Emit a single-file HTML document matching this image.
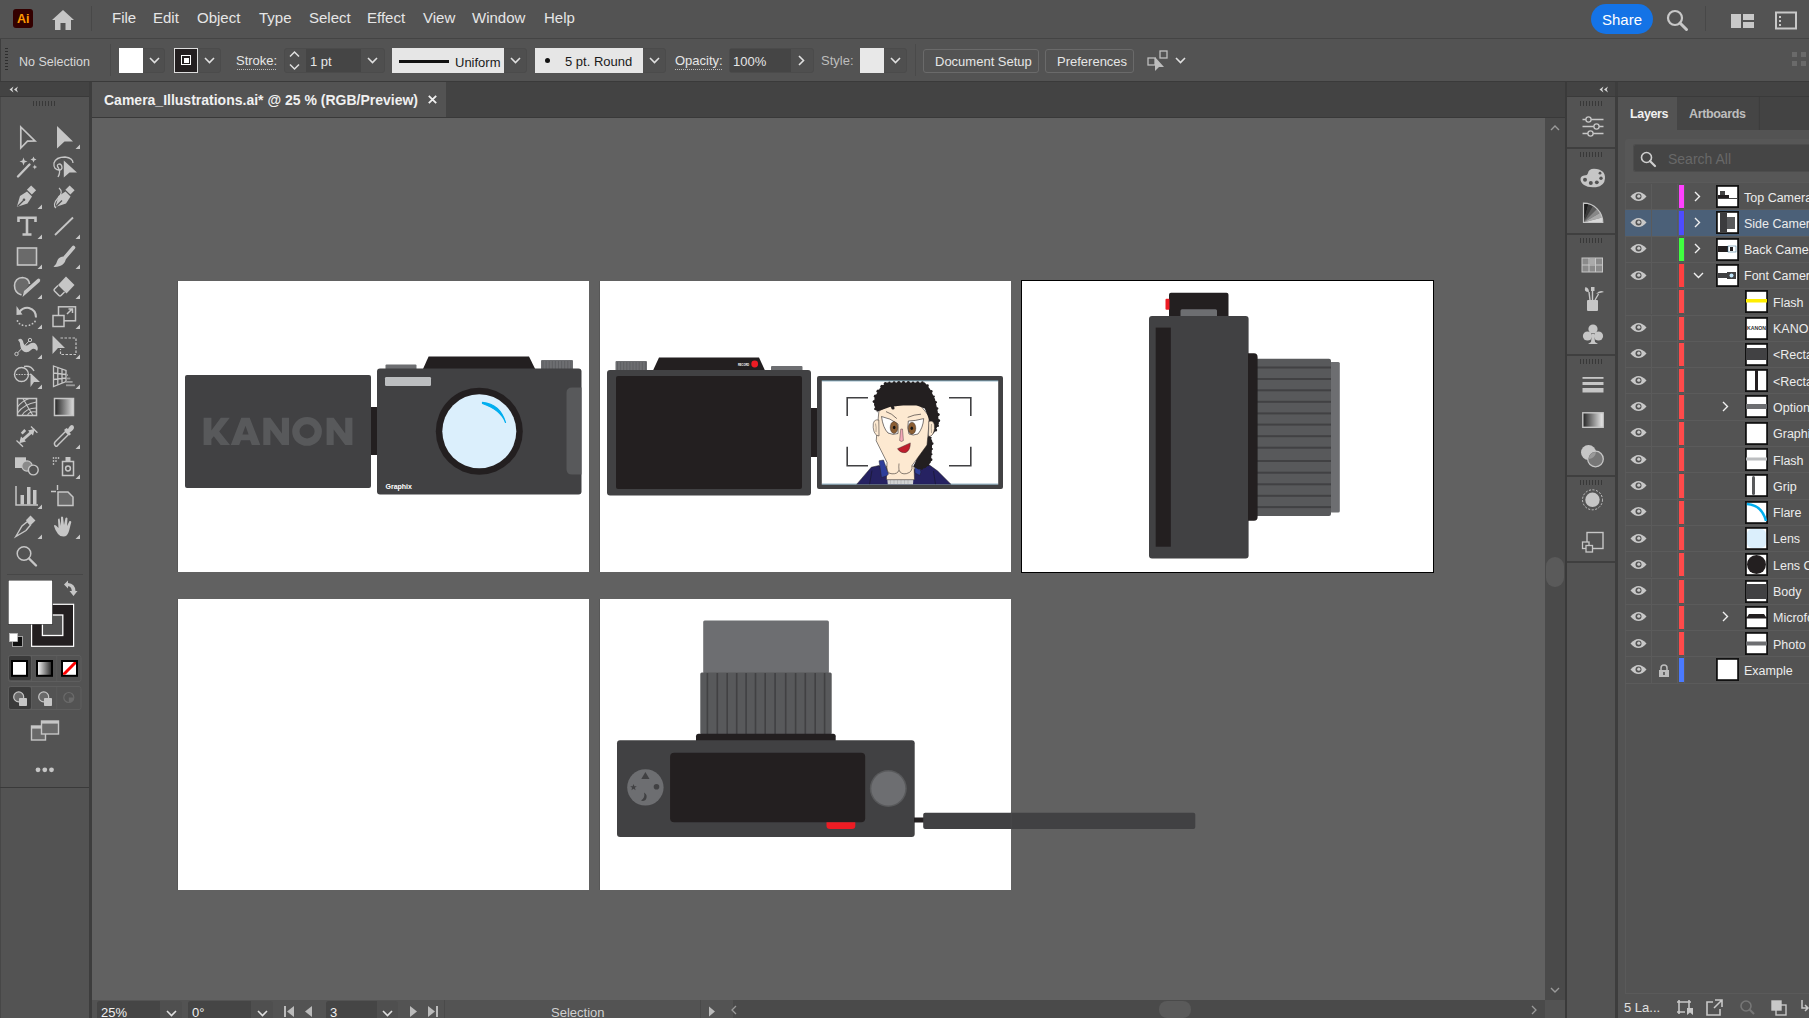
<!DOCTYPE html><html><head><meta charset="utf-8"><style>
*{margin:0;padding:0;box-sizing:border-box}
html,body{width:1809px;height:1018px;overflow:hidden;background:#535353;font-family:"Liberation Sans",sans-serif;color:#dedede}
.a{position:absolute}
.t{position:absolute;white-space:nowrap;line-height:1}
svg{position:absolute;overflow:visible}
</style></head><body><div class="a" style="left:0;top:0;width:1809px;height:38px;background:#535353"></div><div class="a" style="left:0;top:38px;width:1809px;height:1px;background:#444"></div><div class="a" style="left:13px;top:9px;width:20px;height:19px;background:#330000;border-radius:3px"></div><div class="t" style="left:17px;top:12.5px;font-size:12.5px;font-weight:bold;color:#ff9a00;letter-spacing:0px">Ai</div><svg style="left:51px;top:10px" width="24" height="21" viewBox="0 0 24 21"><path d="M12 0 L23 10 L20 10 L20 20 L14.5 20 L14.5 13 L9.5 13 L9.5 20 L4 20 L4 10 L1 10 Z" fill="#c6c6c6"/></svg><div class="a" style="left:91px;top:6px;width:1px;height:25px;background:#484848"></div><div class="t" style="left:112px;top:10.4px;font-size:15px;color:#e6e6e6">File</div><div class="t" style="left:153px;top:10.4px;font-size:15px;color:#e6e6e6">Edit</div><div class="t" style="left:197px;top:10.4px;font-size:15px;color:#e6e6e6">Object</div><div class="t" style="left:259px;top:10.4px;font-size:15px;color:#e6e6e6">Type</div><div class="t" style="left:309px;top:10.4px;font-size:15px;color:#e6e6e6">Select</div><div class="t" style="left:367px;top:10.4px;font-size:15px;color:#e6e6e6">Effect</div><div class="t" style="left:423px;top:10.4px;font-size:15px;color:#e6e6e6">View</div><div class="t" style="left:472px;top:10.4px;font-size:15px;color:#e6e6e6">Window</div><div class="t" style="left:544px;top:10.4px;font-size:15px;color:#e6e6e6">Help</div><div class="a" style="left:1591px;top:4px;width:62px;height:30px;background:#1473e6;border-radius:15px"></div><div class="t" style="left:1602px;top:12px;font-size:15px;color:#fff">Share</div><svg style="left:1666px;top:9px" width="22" height="22" viewBox="0 0 22 22"><circle cx="9" cy="9" r="7" fill="none" stroke="#c8c8c8" stroke-width="2.2"/><line x1="14" y1="14" x2="20.5" y2="20.5" stroke="#c8c8c8" stroke-width="3" stroke-linecap="round"/></svg><div class="a" style="left:1705px;top:6px;width:1px;height:25px;background:#484848"></div><svg style="left:1731px;top:13px" width="23" height="16" viewBox="0 0 23 16"><rect x="0" y="1" width="10" height="14" fill="#c8c8c8"/><rect x="12" y="1" width="11" height="6" fill="#c8c8c8"/><rect x="12" y="9" width="11" height="6" fill="#c8c8c8"/></svg><svg style="left:1775px;top:11px" width="22" height="19" viewBox="0 0 22 19"><rect x="1" y="1.5" width="20" height="16" fill="none" stroke="#c8c8c8" stroke-width="2"/><rect x="4" y="5" width="2" height="2" fill="#c8c8c8"/><rect x="4" y="9" width="2" height="2" fill="#c8c8c8"/><rect x="4" y="13" width="2" height="2" fill="#c8c8c8"/></svg><div class="a" style="left:0;top:39px;width:1809px;height:42px;background:#535353"></div><div class="a" style="left:0;top:39px;width:1px;height:42px;background:#3e3e3e"></div><div class="a" style="left:0;top:81px;width:1809px;height:1px;background:#3a3a3a"></div><div class="a" style="left:5px;top:48px;width:3px;height:1px;background:#2e2e2e"></div><div class="a" style="left:5px;top:51px;width:3px;height:1px;background:#2e2e2e"></div><div class="a" style="left:5px;top:54px;width:3px;height:1px;background:#2e2e2e"></div><div class="a" style="left:5px;top:57px;width:3px;height:1px;background:#2e2e2e"></div><div class="a" style="left:5px;top:60px;width:3px;height:1px;background:#2e2e2e"></div><div class="a" style="left:5px;top:63px;width:3px;height:1px;background:#2e2e2e"></div><div class="a" style="left:5px;top:66px;width:3px;height:1px;background:#2e2e2e"></div><div class="a" style="left:5px;top:69px;width:3px;height:1px;background:#2e2e2e"></div><div class="t" style="left:19px;top:56px;font-size:12.5px;color:#d8d8d8">No Selection</div><div class="a" style="left:110px;top:44px;width:1px;height:32px;background:#4a4a4a"></div><div class="a" style="left:119px;top:48px;width:46px;height:25px;border:1px solid #4b4b4b;border-radius:3px;background:#4f4f4f"></div><div class="a" style="left:119px;top:48px;width:24px;height:25px;background:#fff"></div><svg style="left:149px;top:57px" width="11" height="7" viewBox="0 0 11 7"><path d="M1 1 L5.5 5.5 L10 1" fill="none" stroke="#e0e0e0" stroke-width="1.6"/></svg><div class="a" style="left:173px;top:48px;width:48px;height:25px;border:1px solid #4b4b4b;border-radius:3px;background:#4f4f4f"></div><div class="a" style="left:174px;top:48px;width:24px;height:25px;background:#231f20;border:1px solid #ddd"></div><div class="a" style="left:181px;top:55px;width:10px;height:10px;border:1.5px solid #fff"></div><div class="a" style="left:183.5px;top:57.5px;width:5px;height:5px;background:#fff"></div><svg style="left:204px;top:57px" width="11" height="7" viewBox="0 0 11 7"><path d="M1 1 L5.5 5.5 L10 1" fill="none" stroke="#e0e0e0" stroke-width="1.6"/></svg><div class="t" style="left:236px;top:54px;font-size:13px;color:#e6e6e6">Stroke:</div><div class="a" style="left:237px;top:69px;width:39px;height:1px;border-top:1px dotted #bbb"></div><div class="a" style="left:284px;top:48px;width:101px;height:25px;border:1px solid #4b4b4b;border-radius:3px;background:#4f4f4f"></div><div class="a" style="left:306px;top:49px;width:55px;height:23px;background:#454545"></div><svg style="left:289px;top:51px" width="11" height="19" viewBox="0 0 11 19"><path d="M1 5.5 L5.5 1 L10 5.5 M1 13.5 L5.5 18 L10 13.5" fill="none" stroke="#e0e0e0" stroke-width="1.5"/></svg><div class="t" style="left:310px;top:55px;font-size:13px;color:#e6e6e6">1 pt</div><svg style="left:367px;top:57px" width="11" height="7" viewBox="0 0 11 7"><path d="M1 1 L5.5 5.5 L10 1" fill="none" stroke="#e0e0e0" stroke-width="1.6"/></svg><div class="a" style="left:392px;top:48px;width:135px;height:25px;border:1px solid #4b4b4b;border-radius:3px;background:#4f4f4f"></div><div class="a" style="left:392px;top:48px;width:112px;height:25px;background:#e6e6e6"></div><div class="a" style="left:399px;top:60px;width:50px;height:3px;background:#111"></div><div class="t" style="left:455px;top:56px;font-size:13px;color:#1a1a1a">Uniform</div><svg style="left:510px;top:57px" width="11" height="7" viewBox="0 0 11 7"><path d="M1 1 L5.5 5.5 L10 1" fill="none" stroke="#e0e0e0" stroke-width="1.6"/></svg><div class="a" style="left:535px;top:48px;width:131px;height:25px;border:1px solid #4b4b4b;border-radius:3px;background:#4f4f4f"></div><div class="a" style="left:535px;top:48px;width:108px;height:25px;background:#e6e6e6"></div><div class="a" style="left:545px;top:58px;width:5px;height:5px;border-radius:50%;background:#111"></div><div class="t" style="left:565px;top:55px;font-size:13px;color:#1a1a1a">5 pt. Round</div><svg style="left:649px;top:57px" width="11" height="7" viewBox="0 0 11 7"><path d="M1 1 L5.5 5.5 L10 1" fill="none" stroke="#e0e0e0" stroke-width="1.6"/></svg><div class="t" style="left:675px;top:54px;font-size:13px;color:#e6e6e6">Opacity:</div><div class="a" style="left:675px;top:69px;width:47px;height:1px;border-top:1px dotted #bbb"></div><div class="a" style="left:729px;top:48px;width:85px;height:25px;border:1px solid #4b4b4b;border-radius:3px;background:#4f4f4f"></div><div class="a" style="left:730px;top:49px;width:61px;height:23px;background:#454545"></div><div class="t" style="left:733px;top:55px;font-size:13px;color:#e6e6e6">100%</div><svg style="left:798px;top:55px" width="7" height="11" viewBox="0 0 7 11"><path d="M1 1 L5.5 5.5 L1 10" fill="none" stroke="#e0e0e0" stroke-width="1.6"/></svg><div class="t" style="left:821px;top:54px;font-size:13px;color:#bdbdbd">Style:</div><div class="a" style="left:860px;top:48px;width:47px;height:25px;border:1px solid #4b4b4b;border-radius:3px;background:#4f4f4f"></div><div class="a" style="left:860px;top:48px;width:24px;height:25px;background:#e8e8e8"></div><svg style="left:890px;top:57px" width="11" height="7" viewBox="0 0 11 7"><path d="M1 1 L5.5 5.5 L10 1" fill="none" stroke="#e0e0e0" stroke-width="1.6"/></svg><div class="a" style="left:915px;top:44px;width:1px;height:32px;background:#4a4a4a"></div><div class="a" style="left:923px;top:49px;width:116px;height:24px;border:1px solid #6a6a6a;border-radius:3px;background:#535353"></div><div class="t" style="left:935px;top:55px;font-size:13px;color:#e6e6e6">Document Setup</div><div class="a" style="left:1045px;top:49px;width:89px;height:24px;border:1px solid #6a6a6a;border-radius:3px;background:#535353"></div><div class="t" style="left:1057px;top:55px;font-size:13px;color:#e6e6e6">Preferences</div><svg style="left:1147px;top:50px" width="22" height="22" viewBox="0 0 22 22"><rect x="1" y="8" width="7" height="7" fill="none" stroke="#bdbdbd" stroke-width="1.3"/><rect x="13" y="1" width="7" height="7" fill="none" stroke="#bdbdbd" stroke-width="1.3"/><path d="M8 7 L8 21 L12 17 L17 17 Z" fill="#bdbdbd"/></svg><svg style="left:1175px;top:57px" width="11" height="7" viewBox="0 0 11 7"><path d="M1 1 L5.5 5.5 L10 1" fill="none" stroke="#e0e0e0" stroke-width="1.6"/></svg><svg style="left:1791px;top:51px" width="18" height="18" viewBox="0 0 18 18"><rect x="1" y="1" width="5" height="5" fill="#6a6a6a"/><rect x="10" y="1" width="5" height="5" fill="#6a6a6a"/><rect x="1" y="10" width="5" height="5" fill="#6a6a6a"/><rect x="10" y="10" width="5" height="5" fill="#6a6a6a"/></svg><div class="a" style="left:0;top:82px;width:89px;height:936px;background:#535353"></div><div class="a" style="left:0;top:82px;width:89px;height:14px;background:#434343"></div><div class="a" style="left:0;top:96px;width:89px;height:1px;background:#3a3a3a"></div><svg style="left:9px;top:86px" width="10" height="7" viewBox="0 0 10 7"><path d="M4.5 0.5 L0.5 3.5 L4.5 6.5 L3.2 3.5 Z M9 0.5 L5 3.5 L9 6.5 L7.7 3.5 Z" fill="#d8d8d8"/></svg><div class="a" style="left:89px;top:82px;width:3px;height:936px;background:#3d3d3d"></div><div class="a" style="left:0;top:97px;width:1px;height:921px;background:#474747"></div><div class="a" style="left:33px;top:101px;width:1px;height:5px;background:#383838"></div><div class="a" style="left:36px;top:101px;width:1px;height:5px;background:#383838"></div><div class="a" style="left:39px;top:101px;width:1px;height:5px;background:#383838"></div><div class="a" style="left:42px;top:101px;width:1px;height:5px;background:#383838"></div><div class="a" style="left:45px;top:101px;width:1px;height:5px;background:#383838"></div><div class="a" style="left:48px;top:101px;width:1px;height:5px;background:#383838"></div><div class="a" style="left:51px;top:101px;width:1px;height:5px;background:#383838"></div><div class="a" style="left:54px;top:101px;width:1px;height:5px;background:#383838"></div><div class="a" style="left:7px;top:574px;width:76px;height:1px;background:#474747"></div><div class="a" style="left:0;top:787px;width:89px;height:1px;background:#3a3a3a"></div><svg style="left:0;top:0" width="92" height="1018" viewBox="0 0 92 1018"><path d="M20.8 127 L35 141 L27.5 141.2 L20.8 148 Z" fill="none" stroke="#c6c6c6" stroke-width="1.7" stroke-linejoin="miter"/><path d="M57 126 L73 141.5 L64.5 141.5 L57 148.5 Z" fill="#c6c6c6"/><path d="M80 149 L75.5 149 L80 144.5 Z" fill="#c6c6c6"/><line x1="18" y1="176.5" x2="29.5" y2="164.5" stroke="#c6c6c6" stroke-width="2.4" stroke-linecap="round"/><path d="M23.5 157.5 L24.6 160.4 L27.5 161.5 L24.6 162.6 L23.5 165.5 L22.4 162.6 L19.5 161.5 L22.4 160.4 Z" fill="#c6c6c6"/><path d="M33.5 156.5 L34.4 158.6 L36.5 159.5 L34.4 160.4 L33.5 162.5 L32.6 160.4 L30.5 159.5 L32.6 158.6 Z" fill="#c6c6c6"/><path d="M34.8 164.5 L35.5 166.2 L37.2 167 L35.5 167.8 L34.8 169.5 L34.1 167.8 L32.4 167 L34.1 166.2 Z" fill="#c6c6c6"/><path d="M60 170 Q53 170 54 163 Q56 157 65 157 Q73 158 73 163 M58 177 Q61 172 58.5 168 Q56 165 59 164 Q62 164 62 168 Q61 171 58 170" fill="none" stroke="#c6c6c6" stroke-width="1.3"/><path d="M63.8 160.5 L77 172.5 L69.5 172.5 L63.8 177.5 Z" fill="#c6c6c6"/><path d="M16.8 207 L20 196 L27 191.5 L32 196.5 L27.5 203.5 Z" fill="#c6c6c6"/><rect x="28" y="187" width="7" height="6" transform="rotate(45 31.5 190)" fill="#c6c6c6"/><path d="M17.5 206.5 L23.5 200.5" stroke="#535353" stroke-width="1.2"/><circle cx="24" cy="199.8" r="1.3" fill="#535353"/><path d="M42 209 L37.5 209 L42 204.5 Z" fill="#c6c6c6"/><path d="M55.5 207 L58.5 196 L65.5 191.5 L70.5 196.5 L66 203.5 Z" fill="#c6c6c6"/><rect x="66.5" y="187" width="7" height="6" transform="rotate(45 70 190)" fill="#c6c6c6"/><path d="M56 206.5 L62 200.5" stroke="#535353" stroke-width="1.2"/><path d="M59 188 Q64 192 58 198 Q52 205 56 208" fill="none" stroke="#c6c6c6" stroke-width="1.2"/><path d="M18.5 222 L18.5 217.8 L35.5 217.8 L35.5 222 M27 218 L27 234.5 M22.5 234.5 L31.5 234.5" fill="none" stroke="#c6c6c6" stroke-width="2.6"/><path d="M42 239 L37.5 239 L42 234.5 Z" fill="#c6c6c6"/><line x1="55" y1="235" x2="73" y2="217.5" stroke="#c6c6c6" stroke-width="1.8"/><path d="M80 239 L75.5 239 L80 234.5 Z" fill="#c6c6c6"/><rect x="17.5" y="248" width="19" height="17" fill="#6a6a6a" stroke="#c6c6c6" stroke-width="1.6"/><path d="M42 269 L37.5 269 L42 264.5 Z" fill="#c6c6c6"/><line x1="73.5" y1="247.5" x2="64.5" y2="258" stroke="#c6c6c6" stroke-width="3.6" stroke-linecap="round"/><path d="M62.5 256.5 L65.8 259.6 Q64.5 264.5 60 266 Q56 267.3 53.5 266.8 Q56.5 264.5 57 261.5 Q58 257.5 62.5 256.5 Z" fill="#c6c6c6"/><path d="M80 269 L75.5 269 L80 264.5 Z" fill="#c6c6c6"/><path d="M21.5 295 Q14.5 293 14.5 285.5 Q15 278 22.5 277.5 Q29 278 29.5 284" fill="#6a6a6a" stroke="#c6c6c6" stroke-width="1.6"/><path d="M22.5 297 L24 291 L37.5 279 Q39 278 40 279.5 Q40.5 281 39.5 282 L26 294 Z" fill="#c6c6c6"/><path d="M42 299 L37.5 299 L42 294.5 Z" fill="#c6c6c6"/><path d="M66 276.5 L74.5 285 L66.5 293.5 L58 285 Z" fill="#c6c6c6"/><path d="M58 285.5 L54.5 289 Q53.5 290 54.5 291 L59 295.5 Q60 296.5 61 295.5 L64.5 292" fill="none" stroke="#c6c6c6" stroke-width="1.5"/><path d="M80 299 L75.5 299 L80 294.5 Z" fill="#c6c6c6"/><path d="M19 312.5 Q23 307 29 308 Q36 310 36 317.5" fill="none" stroke="#c6c6c6" stroke-width="2"/><path d="M16.5 306 L22.5 314.5 L16.5 315 Z" fill="#c6c6c6"/><circle cx="17.5" cy="321" r="0.9" fill="#c6c6c6"/><circle cx="19.5" cy="323.7" r="0.9" fill="#c6c6c6"/><circle cx="22.5" cy="325.2" r="0.9" fill="#c6c6c6"/><circle cx="26" cy="325.8" r="0.9" fill="#c6c6c6"/><circle cx="29.5" cy="325.2" r="0.9" fill="#c6c6c6"/><circle cx="32.5" cy="323.7" r="0.9" fill="#c6c6c6"/><circle cx="35" cy="321.5" r="0.9" fill="#c6c6c6"/><path d="M42 329 L37.5 329 L42 324.5 Z" fill="#c6c6c6"/><rect x="58.5" y="306.8" width="17" height="14" fill="none" stroke="#c6c6c6" stroke-width="1.5"/><rect x="53" y="315.5" width="11" height="11" fill="#535353" stroke="#c6c6c6" stroke-width="1.5"/><path d="M67 314 L72 309 M68.5 309 L72.5 309 L72.5 313" fill="none" stroke="#c6c6c6" stroke-width="1.5"/><path d="M80 329 L75.5 329 L80 324.5 Z" fill="#c6c6c6"/><path d="M18 340 Q21 337 23 341 Q24 347 28 345 Q33 341 36 344 Q39 348 37 351 Q34 347 31 350 Q27 354 23 351 Q20 348 20 343 Q19 341 18 340 Z" fill="#c6c6c6"/><line x1="16.5" y1="354" x2="30" y2="340" stroke="#c6c6c6" stroke-width="1"/><circle cx="16.5" cy="354" r="1.7" fill="#535353" stroke="#c6c6c6" stroke-width="1"/><circle cx="30" cy="340" r="1.7" fill="#535353" stroke="#c6c6c6" stroke-width="1"/><path d="M42 359 L37.5 359 L42 354.5 Z" fill="#c6c6c6"/><path d="M52.5 335.5 L65 348 L58 348 L52.5 354 Z" fill="#c6c6c6"/><path d="M60.5 338 L76 338 L76 354.5 L60.5 354.5 L60.5 349" fill="none" stroke="#c6c6c6" stroke-width="1.2" stroke-dasharray="2.5 1.5"/><path d="M80 359 L75.5 359 L80 354.5 Z" fill="#c6c6c6"/><circle cx="21.5" cy="374.5" r="7" fill="none" stroke="#c6c6c6" stroke-width="1.4"/><path d="M24 366.5 Q31 365 34 371" fill="none" stroke="#c6c6c6" stroke-width="1.4"/><path d="M16 374.5 L31 374.5" stroke="#c6c6c6" stroke-width="1" stroke-dasharray="1.5 1.2"/><path d="M30.5 373 L40 382 L34 382 L30.5 387 Z" fill="#c6c6c6"/><path d="M42 389 L37.5 389 L42 384.5 Z" fill="#c6c6c6"/><path d="M53.5 366 L66 370.5 L66 381.5 L53.5 386.5 Z M53.5 373 L66 374.5 M53.5 379.5 L66 378 M57.8 367.5 L57.8 385 M62 369 L62 383" fill="none" stroke="#c6c6c6" stroke-width="1.3"/><rect x="66" y="374.2" width="2.0" height="1.8" fill="#9a9a9a"/><rect x="66" y="377.6" width="4.3" height="1.8" fill="#9a9a9a"/><rect x="66" y="381" width="6.6" height="1.8" fill="#9a9a9a"/><rect x="66" y="384.4" width="8.899999999999999" height="1.8" fill="#9a9a9a"/><path d="M80 389 L75.5 389 L80 384.5 Z" fill="#c6c6c6"/><rect x="17.5" y="398.5" width="19" height="17" fill="none" stroke="#c6c6c6" stroke-width="1.5"/><path d="M17.5 407 Q22 401 29 398.5 M17.5 413 Q24 404 36.5 402 M22 415.5 Q26 408 36.5 408 M27.5 415.5 Q29 411 36.5 412 M23 398.5 Q27 406 33 415.5" fill="none" stroke="#c6c6c6" stroke-width="1.1"/><defs><linearGradient id="tg" x1="0" x2="1"><stop offset="0" stop-color="#222"/><stop offset="1" stop-color="#ddd"/></linearGradient></defs><rect x="54.5" y="398.5" width="19" height="17" fill="url(#tg)" stroke="#c6c6c6" stroke-width="1.5"/><line x1="22.5" y1="440" x2="31.5" y2="432" stroke="#c6c6c6" stroke-width="3"/><path d="M19.2 443.2 L21 436.5 L26 441.5 Z M34.8 428.8 L33 435.5 L28 430.5 Z" fill="#c6c6c6"/><path d="M16.5 440.5 L23 446.8 M31 426.5 L37.4 432.8" stroke="#c6c6c6" stroke-width="1.3"/><rect x="21" y="430.5" width="5" height="2.6" transform="rotate(-45 23.5 431.8)" fill="#c6c6c6"/><path d="M55.5 446 Q53.5 444 55 442 L65.5 431.5 L68.5 434.5 L58 445 Q56.5 447 55.5 446 Z" fill="none" stroke="#c6c6c6" stroke-width="1.4"/><path d="M64 430 L69.5 435.5 L71 434 L69.5 432.5 Q74 430 74 427.5 Q74 425 72 425 Q70 425 68 429 L66.5 428 Z" fill="#c6c6c6"/><path d="M80 449 L75.5 449 L80 444.5 Z" fill="#c6c6c6"/><rect x="15" y="457.3" width="11" height="10.7" fill="#c6c6c6"/><circle cx="27" cy="466" r="5.2" fill="#8a8a8a" stroke="#c6c6c6" stroke-width="1.2"/><circle cx="33.3" cy="470" r="4.9" fill="#535353" stroke="#c6c6c6" stroke-width="1.4"/><path d="M52.6 458 L54.4 458 M53.5 457.1 L53.5 458.9" stroke="#c6c6c6" stroke-width="0.8"/><path d="M55.1 458 L56.9 458 M56 457.1 L56 458.9" stroke="#c6c6c6" stroke-width="0.8"/><path d="M57.6 458 L59.4 458 M58.5 457.1 L58.5 458.9" stroke="#c6c6c6" stroke-width="0.8"/><path d="M52.6 461 L54.4 461 M53.5 460.1 L53.5 461.9" stroke="#c6c6c6" stroke-width="0.8"/><path d="M55.1 461 L56.9 461 M56 460.1 L56 461.9" stroke="#c6c6c6" stroke-width="0.8"/><path d="M52.6 464 L54.4 464 M53.5 463.1 L53.5 464.9" stroke="#c6c6c6" stroke-width="0.8"/><rect x="62.5" y="461.5" width="11" height="14" fill="none" stroke="#c6c6c6" stroke-width="1.5"/><rect x="65.5" y="457" width="5" height="4" fill="#c6c6c6"/><circle cx="68" cy="468.5" r="2.4" fill="none" stroke="#c6c6c6" stroke-width="1.5"/><path d="M80 479 L75.5 479 L80 474.5 Z" fill="#c6c6c6"/><path d="M16 486 L16 505 L38 505" fill="none" stroke="#c6c6c6" stroke-width="1.5"/><rect x="20.5" y="495" width="3.5" height="9.5" fill="#c6c6c6"/><rect x="27" y="487" width="3.5" height="17.5" fill="#c6c6c6"/><rect x="33" y="490" width="3.5" height="14.5" fill="#c6c6c6"/><path d="M42 509 L37.5 509 L42 504.5 Z" fill="#c6c6c6"/><path d="M57.5 485 L57.5 490 M51 491.5 L56 491.5" stroke="#c6c6c6" stroke-width="1.4"/><path d="M58 492 L68 492 L73 497 L73 505.5 L58 505.5 Z" fill="#6a6a6a" stroke="#c6c6c6" stroke-width="1.5"/><path d="M15.8 536.5 L22 526 L27.5 521.5 L30.5 525 L26 530.5 Z" fill="none" stroke="#c6c6c6" stroke-width="1.4"/><rect x="27" y="517" width="7" height="6.5" transform="rotate(45 30.5 520.5)" fill="#c6c6c6"/><path d="M42 539 L37.5 539 L42 534.5 Z" fill="#c6c6c6"/><path d="M58 534 Q55 530 54 526 Q54 524.5 56 525.5 L58.5 528 L58 520 Q58 518 59.5 518.5 L61 526 L61 517.5 Q61.5 516 63 517 L64 525 L65.5 518 Q67 517 67.5 518.5 L67 526 L69.5 521 Q71 520.5 71.3 522 L69 531 Q67.5 536.5 63.5 536.5 Q60 536.5 58 534 Z" fill="#c6c6c6"/><path d="M80 539 L75.5 539 L80 534.5 Z" fill="#c6c6c6"/><circle cx="24" cy="553.5" r="6.8" fill="none" stroke="#c6c6c6" stroke-width="1.5"/><line x1="29" y1="558.5" x2="36" y2="565.5" stroke="#c6c6c6" stroke-width="2.4" stroke-linecap="round"/><rect x="31" y="603.7" width="43.2" height="43.2" fill="#fff"/><rect x="32.2" y="604.9" width="40.8" height="40.8" fill="#231f20"/><rect x="42.4" y="615" width="20.4" height="20.5" fill="#535353" stroke="#fff" stroke-width="1.3"/><rect x="8" y="580" width="44.8" height="44.6" fill="#2a2a2a"/><rect x="8.6" y="580.5" width="43.6" height="43.6" fill="#fff"/><path d="M64 584.5 L68 580.5 L68 583 Q75 583.5 75.5 591 L77.5 591 L73.5 596 L69.5 591 L71.8 591 Q71.5 586.5 68 586.3 L68 588.5 Z" fill="#c6c6c6"/><rect x="12.5" y="636.5" width="10" height="10" fill="#111" stroke="#bbb" stroke-width="0.8"/><rect x="9.5" y="633.5" width="8" height="8" fill="#fff" stroke="#bbb" stroke-width="0.8"/><rect x="8.5" y="655.5" width="72.5" height="26" rx="2" fill="#535353" stroke="#5e5e5e" stroke-width="1"/><rect x="9" y="656" width="22" height="24" rx="2" fill="#3a3a3a"/><path d="M31.5 656 L31.5 681 M56.7 656 L56.7 681" stroke="#5b5b5b" stroke-width="1"/><rect x="12" y="661" width="15" height="14.8" fill="#fff" stroke="#000" stroke-width="2"/><defs><linearGradient id="tg2" x1="0" x2="1"><stop offset="0" stop-color="#fff"/><stop offset="1" stop-color="#222"/></linearGradient></defs><rect x="37" y="661" width="15" height="14.8" fill="url(#tg2)" stroke="#000" stroke-width="2"/><defs><clipPath id="nc"><rect x="63" y="662" width="13" height="12.8"/></clipPath></defs><rect x="62" y="661" width="15" height="14.8" fill="#fff" stroke="#000" stroke-width="2"/><line x1="61" y1="677" x2="78" y2="660" stroke="#ff0000" stroke-width="3" clip-path="url(#nc)"/><rect x="8.5" y="686.5" width="72.5" height="23" rx="2" fill="#535353" stroke="#5e5e5e" stroke-width="1"/><rect x="9" y="687" width="22" height="22" rx="2" fill="#3a3a3a"/><path d="M31.5 687 L31.5 709 M56.7 687 L56.7 709" stroke="#5b5b5b" stroke-width="1"/><circle cx="18.7" cy="696.9" r="5" fill="#6a6a6a" stroke="#c6c6c6" stroke-width="1.2"/><rect x="19" y="698" width="8" height="8" rx="0.8" fill="#c6c6c6"/><circle cx="43.7" cy="696.9" r="5" fill="#6a6a6a" stroke="#c6c6c6" stroke-width="1.2"/><rect x="44" y="698" width="8" height="8" rx="0.8" fill="#c6c6c6"/><circle cx="68.8" cy="697.5" r="5" fill="none" stroke="#6a6a6a" stroke-width="1.2"/><path d="M68.8 697.5 L73.8 697.5 A5 5 0 0 1 68.8 702.5 Z" fill="#6a6a6a"/><rect x="31.5" y="726" width="14" height="14" fill="#6a6a6a" stroke="#c6c6c6" stroke-width="1.4"/><rect x="41.5" y="721" width="17" height="13" fill="#6a6a6a" stroke="#c6c6c6" stroke-width="1.4"/><rect x="41.5" y="721" width="17" height="2.6" fill="#c6c6c6"/><rect x="31.5" y="726" width="10" height="2.6" fill="#c6c6c6"/><circle cx="38" cy="769.8" r="2.4" fill="#c6c6c6"/><circle cx="44.8" cy="769.8" r="2.4" fill="#c6c6c6"/><circle cx="51.5" cy="769.8" r="2.4" fill="#c6c6c6"/></svg><div class="a" style="left:92px;top:82px;width:1473px;height:35px;background:#434343"></div><div class="a" style="left:92px;top:82px;width:354px;height:35px;background:#535353"></div><div class="a" style="left:92px;top:117px;width:1473px;height:1px;background:#393939"></div><div class="t" style="left:104px;top:93px;font-size:14px;font-weight:bold;color:#f0f0f0">Camera_Illustrations.ai* @ 25 % (RGB/Preview)</div><svg style="left:428px;top:95px" width="9" height="9" viewBox="0 0 9 9"><path d="M0.8 0.8 L8.2 8.2 M8.2 0.8 L0.8 8.2" stroke="#f0f0f0" stroke-width="1.8"/></svg><div class="a" style="left:92px;top:118px;width:1453px;height:882px;background:#616161"></div><div class="a" style="left:1545px;top:118px;width:20px;height:882px;background:#4a4a4a"></div><svg style="left:1550px;top:125px" width="10" height="6" viewBox="0 0 10 6"><path d="M1 5 L5 1 L9 5" fill="none" stroke="#9a9a9a" stroke-width="1.4"/></svg><svg style="left:1550px;top:987px" width="10" height="6" viewBox="0 0 10 6"><path d="M1 1 L5 5 L9 1" fill="none" stroke="#9a9a9a" stroke-width="1.4"/></svg><div class="a" style="left:1546px;top:557px;width:18px;height:30px;border-radius:9px;background:#5a5a5a"></div><div class="a" style="left:1565px;top:82px;width:2px;height:936px;background:#3a3a3a"></div><svg style="left:0;top:0" width="1809" height="1018" viewBox="0 0 1809 1018"><rect x="177" y="281" width="1" height="291" fill="#575757"/><rect x="178" y="281" width="411" height="291" fill="#fff"/><rect x="599" y="281" width="1" height="291" fill="#575757"/><rect x="600" y="281" width="411" height="291" fill="#fff"/><rect x="177" y="599" width="1" height="291" fill="#575757"/><rect x="178" y="599" width="411" height="291" fill="#fff"/><rect x="599" y="599" width="1" height="291" fill="#575757"/><rect x="600" y="599" width="411" height="291" fill="#fff"/><rect x="1021.5" y="280.5" width="412" height="292" fill="#fff" stroke="#000" stroke-width="1"/><rect x="185" y="375" width="186" height="113" rx="2" fill="#414143"/><path fill-rule="evenodd" fill="#58595b" d="M203.6 417.8 H211.4 V430.5 L220.8 417.8 H229.8 L219.2 431.6 L230 445.1 H220.6 L213.8 436.3 L211.4 439.2 V445.1 H203.6 Z M241.3 417.8 H249.7 L260.3 445.1 H251.8 L250 440.2 H241 L239.2 445.1 H230.8 Z M245.5 425.8 L242.4 434.6 H248.6 Z M263.3 417.8 H270.4 L281.9 433.4 V417.8 H289 V445.1 H281.9 L270.4 429.6 V445.1 H263.3 Z M326.6 417.8 H333.7 L345.2 433.4 V417.8 H352.4 V445.1 H345.2 L333.7 429.6 V445.1 H326.6 Z"/><ellipse cx="307.05" cy="431.4" rx="11.2" ry="10.75" fill="none" stroke="#58595b" stroke-width="7.3"/><rect x="371" y="407" width="7" height="48" fill="#231f20"/><path d="M423 369 L428.6 356.5 L529 356.5 L535.2 369 Z" fill="#231f20"/><rect x="385.5" y="364.5" width="31" height="6" rx="1" fill="#6d6e71"/><rect x="541" y="360" width="32" height="10" rx="1" fill="#6d6e71"/><rect x="542.5" y="361" width="1" height="9" fill="#5e5f62"/><rect x="545.6" y="361" width="1" height="9" fill="#5e5f62"/><rect x="548.7" y="361" width="1" height="9" fill="#5e5f62"/><rect x="551.8" y="361" width="1" height="9" fill="#5e5f62"/><rect x="554.9" y="361" width="1" height="9" fill="#5e5f62"/><rect x="558.0" y="361" width="1" height="9" fill="#5e5f62"/><rect x="561.1" y="361" width="1" height="9" fill="#5e5f62"/><rect x="564.2" y="361" width="1" height="9" fill="#5e5f62"/><rect x="567.3" y="361" width="1" height="9" fill="#5e5f62"/><rect x="570.4" y="361" width="1" height="9" fill="#5e5f62"/><rect x="377" y="368.5" width="204.5" height="126" rx="3" fill="#414143"/><rect x="385" y="377" width="46" height="9" rx="1.2" fill="#bcbec0"/><path d="M581.5 387.5 L572 387.5 Q566.5 387.5 566.5 393 L566.5 469 Q566.5 474.5 572 474.5 L581.5 474.5 Z" fill="#58595b"/><circle cx="479.3" cy="431.3" r="43.5" fill="#231f20"/><circle cx="479.3" cy="431.3" r="37" fill="#dbeffc"/><path d="M482.5 402.3 Q500 404 505.5 422.5 Q501 410 482.5 403.5 Z" fill="#00aeef" stroke="#00aeef" stroke-width="1.2" stroke-linejoin="round"/><text x="385.5" y="488.5" font-family="Liberation Sans" font-weight="bold" font-size="7" fill="#fff">Graphix</text><rect x="615.5" y="361" width="31.5" height="10" rx="1" fill="#6d6e71"/><rect x="617.0" y="362" width="1" height="9" fill="#5e5f62"/><rect x="620.1" y="362" width="1" height="9" fill="#5e5f62"/><rect x="623.2" y="362" width="1" height="9" fill="#5e5f62"/><rect x="626.3" y="362" width="1" height="9" fill="#5e5f62"/><rect x="629.4" y="362" width="1" height="9" fill="#5e5f62"/><rect x="632.5" y="362" width="1" height="9" fill="#5e5f62"/><rect x="635.6" y="362" width="1" height="9" fill="#5e5f62"/><rect x="638.7" y="362" width="1" height="9" fill="#5e5f62"/><rect x="641.8" y="362" width="1" height="9" fill="#5e5f62"/><rect x="644.9" y="362" width="1" height="9" fill="#5e5f62"/><path d="M653 370.5 L659 357.5 L759 357.5 L765 370.5 Z" fill="#231f20"/><rect x="771" y="366" width="31.5" height="5" rx="1" fill="#6d6e71"/><text x="738" y="366" font-family="Liberation Sans" font-weight="bold" font-size="3.4" fill="#fff" textLength="11.2" lengthAdjust="spacingAndGlyphs">RECORD</text><circle cx="754.7" cy="364" r="3.4" fill="#ed1c24"/><rect x="607" y="370" width="204" height="125.5" rx="3" fill="#414143"/><rect x="616" y="376" width="186" height="113" rx="2" fill="#231f20"/><rect x="811" y="408" width="7" height="49" fill="#231f20"/><rect x="817" y="376" width="186" height="113" rx="2" fill="#414143"/><rect x="821.8" y="380.6" width="176.4" height="104" fill="#fff"/><line x1="822" y1="380.9" x2="998" y2="380.9" stroke="#2a6a8a" stroke-width="0.6"/><line x1="822" y1="484.1" x2="998" y2="484.1" stroke="#2a6a8a" stroke-width="0.6"/><path d="M868 397.8 L847.2 397.8 L847.2 416 M847.2 446.8 L847.2 465.8 L868 465.8 M949 397.8 L970.8 397.8 L970.8 416 M970.8 446.8 L970.8 465.8 L949 465.8" fill="none" stroke="#414143" stroke-width="1.6"/><defs><clipPath id="scr"><rect x="821.8" y="380.6" width="176.4" height="103.8"/></clipPath></defs><g clip-path="url(#scr)">
<path d="M856.6 484.4 L871.3 467.2 L879 465.5 L887 470 L913 470 L928.8 464.6 L937.7 471 L951.1 484.4 Z" fill="#262262" stroke="#231f20" stroke-width="0.5"/>
<path d="M869.5 484.4 L872 470.5 M935.5 484.4 L933.5 471" stroke="#111" stroke-width="0.45" fill="none"/>
<path d="M887.3 479.2 L913.4 479.2 L913 484.4 L887.8 484.4 Z" fill="#d1d3d4"/>
<path d="M890.5 480 L890.5 484.4 M894 480 L894 484.4 M897.5 480 L897.5 484.4 M901 480 L901 484.4 M904.5 480 L904.5 484.4 M908 480 L908 484.4" stroke="#9a9a9a" stroke-width="0.4"/>
<path d="M886.5 466 L914 466 L914.5 479.7 L886.5 479.7 Z" fill="#fde9d1" stroke="#231f20" stroke-width="0.5"/>
<path d="M879 460.8 L883.5 460 L888.5 474 L886.6 476 L881.5 477.5 Z" fill="#2e3e9a" stroke="#231f20" stroke-width="0.45"/>
<path d="M914.7 464 L917.2 462.5 L921 472 L919.8 475.5 L915 473 Z" fill="#2e3e9a" stroke="#231f20" stroke-width="0.45"/>
<path d="M929 434.5 L932.3 441 L931.8 451.6 L930.8 462.4 L925.5 468 L918.3 469.5 L913.5 466.5 L917.5 457 L923 449 L926 440 Z" fill="#231f20"/>
<circle cx="930.6" cy="437.8" r="1.07" fill="#231f20"/><circle cx="932.2" cy="443.6" r="1.31" fill="#231f20"/><circle cx="931.9" cy="449.0" r="1.06" fill="#231f20"/><circle cx="931.5" cy="454.3" r="1.00" fill="#231f20"/><circle cx="931.0" cy="459.7" r="1.44" fill="#231f20"/><circle cx="928.1" cy="465.2" r="1.10" fill="#231f20"/><circle cx="921.9" cy="468.8" r="1.11" fill="#231f20"/>
<path d="M878.9 411 L876.2 440.8 L887 462.4 Q885.8 474.2 892 473.8 Q897.5 474.2 899 470.2 Q901 474.8 906.5 473.6 Q913 472 911.9 465.7 L927 445 L929 423.5 L929 416 L920 405 L890 405 Z" fill="#fde9d1" stroke="#231f20" stroke-width="0.55"/>
<path d="M899 463.5 Q898.6 467 899 470" fill="none" stroke="#231f20" stroke-width="0.5"/>
<path d="M878.8 420 Q872.5 418.5 873.2 427.5 Q874 435.5 879 436 Z" fill="#fde9d1" stroke="#231f20" stroke-width="0.5"/>
<path d="M875.5 423.5 Q876.5 427 876 432" fill="none" stroke="#231f20" stroke-width="0.35"/>
<path d="M877.3 412.7 L874 405 L874.5 398 L876.2 394.4 L880 388 L883.8 384.6 L887 382.6 L924.8 382.6 L930 389 L935 399 L937.8 411.7 L938.9 423.5 L934.5 432.2 L930.5 436.5 L929 419.2 L924.8 408.4 L916.2 405.2 L903.2 405.2 L894 406.5 L892.4 409 L890.5 406.8 L877.3 411.6 Z" fill="#231f20"/>
<circle cx="875.6" cy="408.9" r="1.47" fill="#231f20"/><circle cx="874.2" cy="401.5" r="1.55" fill="#231f20"/><circle cx="875.4" cy="396.2" r="1.58" fill="#231f20"/><circle cx="878.1" cy="391.2" r="1.67" fill="#231f20"/><circle cx="881.9" cy="386.3" r="1.54" fill="#231f20"/><circle cx="885.4" cy="383.6" r="1.65" fill="#231f20"/><circle cx="889.4" cy="382.6" r="1.12" fill="#231f20"/><circle cx="894.1" cy="382.6" r="1.38" fill="#231f20"/><circle cx="898.8" cy="382.6" r="1.67" fill="#231f20"/><circle cx="903.5" cy="382.6" r="1.49" fill="#231f20"/><circle cx="908.3" cy="382.6" r="1.64" fill="#231f20"/><circle cx="913.0" cy="382.6" r="1.17" fill="#231f20"/><circle cx="917.7" cy="382.6" r="1.38" fill="#231f20"/><circle cx="922.4" cy="382.6" r="1.25" fill="#231f20"/><circle cx="927.4" cy="385.8" r="1.43" fill="#231f20"/><circle cx="931.2" cy="391.5" r="1.44" fill="#231f20"/><circle cx="933.8" cy="396.5" r="1.11" fill="#231f20"/><circle cx="935.7" cy="402.2" r="1.23" fill="#231f20"/><circle cx="937.1" cy="408.5" r="1.27" fill="#231f20"/><circle cx="938.1" cy="414.6" r="1.65" fill="#231f20"/><circle cx="938.6" cy="420.6" r="1.56" fill="#231f20"/><circle cx="937.8" cy="425.7" r="1.20" fill="#231f20"/><circle cx="935.6" cy="430.0" r="1.58" fill="#231f20"/><circle cx="893" cy="408" r="1.6" fill="#231f20"/>
<path d="M928.8 421.4 Q935 419.5 934.5 428.5 Q933.5 436.5 928.5 436.5 Z" fill="#fde9d1" stroke="#231f20" stroke-width="0.5"/>
<path d="M931.5 424 Q931 428 931.5 433" fill="none" stroke="#231f20" stroke-width="0.35"/>
<path d="M881.5 416.5 Q890 418 898 424 L898 433.5 Q893 435.5 888 433 Q883 428 881.5 416.5 Z" fill="#fff" stroke="#231f20" stroke-width="0.6"/>
<path d="M908.3 421 Q915 421 923.7 418.6 Q923 428 918 434 Q913 436 909 434 Q907 428 908.3 421 Z" fill="#fff" stroke="#231f20" stroke-width="0.6"/>
<ellipse cx="894" cy="427.5" rx="3.8" ry="6" fill="#8b5e34" stroke="#231f20" stroke-width="0.4"/>
<ellipse cx="912" cy="428.2" rx="3.8" ry="6" fill="#8b5e34" stroke="#231f20" stroke-width="0.4"/>
<ellipse cx="894.2" cy="427.5" rx="1.3" ry="1.8" fill="#111"/><ellipse cx="911.8" cy="428.2" rx="1.3" ry="1.8" fill="#111"/>
<path d="M886 411.6 Q892 413.5 896.8 418.6 M907.7 417.4 Q914 414.5 921 414.2" fill="none" stroke="#231f20" stroke-width="0.6"/>
<path d="M900.8 429 L899.6 440.5 Q901.5 442.5 903.4 440.5 L902.5 429 Z" fill="#f5a9b8" stroke="#231f20" stroke-width="0.4"/>
<path d="M897.5 448.7 L910.3 442.9 Q910.5 450 906 452.5 Q900.5 453.5 897.5 448.7 Z" fill="#be1e2d" stroke="#231f20" stroke-width="0.4"/>
</g><rect x="1169" y="292.7" width="59.5" height="26" rx="2" fill="#231f20"/><rect x="1165.5" y="298.7" width="4" height="11" rx="1" fill="#ed1c24"/><rect x="1180.5" y="309.2" width="36.5" height="8" rx="1.5" fill="#6d6e71"/><rect x="1149" y="316" width="99.6" height="242.5" rx="3" fill="#414143"/><rect x="1155.7" y="327.6" width="15.1" height="219.1" fill="#231f20"/><rect x="1330" y="362" width="9.8" height="150.6" rx="1.5" fill="#6d6e71"/><rect x="1255" y="358.7" width="76" height="157.2" rx="2" fill="#58595b"/><rect x="1257" y="366.5" width="74" height="2" fill="#414143"/><rect x="1257" y="378" width="74" height="2" fill="#414143"/><rect x="1257" y="389.3" width="74" height="2" fill="#414143"/><rect x="1257" y="400.8" width="74" height="2" fill="#414143"/><rect x="1257" y="412.4" width="74" height="2" fill="#414143"/><rect x="1257" y="423.6" width="74" height="2" fill="#414143"/><rect x="1257" y="435.2" width="74" height="2" fill="#414143"/><rect x="1257" y="446.7" width="74" height="2" fill="#414143"/><rect x="1257" y="460" width="74" height="2" fill="#414143"/><rect x="1257" y="471.7" width="74" height="2" fill="#414143"/><rect x="1257" y="483.3" width="74" height="2" fill="#414143"/><rect x="1257" y="494.8" width="74" height="2" fill="#414143"/><rect x="1257" y="506.1" width="74" height="2" fill="#414143"/><path d="M1248 353.2 L1254 353.2 Q1257.6 353.2 1257.6 357 L1257.6 517 Q1257.6 520.8 1254 520.8 L1248 520.8 Z" fill="#231f20"/><rect x="703.2" y="620.6" width="125.7" height="53" rx="1.5" fill="#6d6e71"/><rect x="700.3" y="672.5" width="131.4" height="62" rx="1.5" fill="#58595b"/><rect x="706.6" y="673" width="1.6" height="61" fill="#414143"/><rect x="716.5" y="673" width="1.6" height="61" fill="#414143"/><rect x="726.4000000000001" y="673" width="1.6" height="61" fill="#414143"/><rect x="735.9000000000001" y="673" width="1.6" height="61" fill="#414143"/><rect x="745.3000000000001" y="673" width="1.6" height="61" fill="#414143"/><rect x="754.7" y="673" width="1.6" height="61" fill="#414143"/><rect x="764.4000000000001" y="673" width="1.6" height="61" fill="#414143"/><rect x="774.3000000000001" y="673" width="1.6" height="61" fill="#414143"/><rect x="784.9000000000001" y="673" width="1.6" height="61" fill="#414143"/><rect x="794.8000000000001" y="673" width="1.6" height="61" fill="#414143"/><rect x="804.5" y="673" width="1.6" height="61" fill="#414143"/><rect x="814.4000000000001" y="673" width="1.6" height="61" fill="#414143"/><rect x="823.8000000000001" y="673" width="1.6" height="61" fill="#414143"/><rect x="696" y="733.8" width="139.7" height="10" rx="2.5" fill="#231f20"/><rect x="617" y="740.2" width="297.7" height="96.7" rx="3" fill="#414143"/><rect x="670.1" y="752.7" width="195.1" height="69.6" rx="4" fill="#231f20"/><path d="M826.5 822.3 L855.3 822.3 L855.3 826 Q855.3 829 852 829 L830 829 Q826.5 829 826.5 826 Z" fill="#ed1c24"/><circle cx="645.4" cy="787.4" r="18.2" fill="#6d6e71"/><path d="M645.4 772 L649.5 779 L641.3 779 Z" fill="#414143"/><circle cx="656.5" cy="786.8" r="2.8" fill="#414143"/><path d="M633.5 784 L634.4 786.3 L636.8 786.3 L634.9 787.8 L635.6 790.2 L633.5 788.8 L631.4 790.2 L632.1 787.8 L630.2 786.3 L632.6 786.3 Z" fill="#414143"/><path d="M644 792.5 Q648.5 795 645.5 800 Q643 801.5 641 800.5 Q645.5 798 644 792.5 Z" fill="#414143"/><circle cx="888.3" cy="788.5" r="18.5" fill="#58595b"/><circle cx="888.3" cy="788.5" r="17" fill="#6d6e71"/><rect x="914" y="817.5" width="10" height="5" fill="#231f20"/><rect x="923.2" y="812.7" width="272.1" height="16.3" rx="2" fill="#414143"/><rect x="1010.8" y="812.7" width="0.6" height="16.3" fill="#4d4d4f"/></svg><div class="a" style="left:92px;top:1000px;width:1453px;height:18px;background:#535353"></div><div class="a" style="left:733px;top:1000px;width:812px;height:18px;background:#4a4a4a"></div><div class="a" style="left:97px;top:1001px;width:85px;height:17px;background:#4f4f4f;border-radius:3px 3px 0 0"></div><div class="a" style="left:97px;top:1001px;width:63px;height:17px;background:#454545;border-radius:3px 0 0 0"></div><div class="t" style="left:101px;top:1006px;font-size:13px;color:#f0f0f0">25%</div><svg style="left:166px;top:1010px" width="11" height="7" viewBox="0 0 11 7"><path d="M1 1 L5.5 5.5 L10 1" fill="none" stroke="#e0e0e0" stroke-width="1.6"/></svg><div class="a" style="left:188px;top:1001px;width:85px;height:17px;background:#4f4f4f;border-radius:3px 3px 0 0"></div><div class="a" style="left:188px;top:1001px;width:63px;height:17px;background:#454545;border-radius:3px 0 0 0"></div><div class="t" style="left:192px;top:1006px;font-size:13px;color:#f0f0f0">0&deg;</div><svg style="left:257px;top:1010px" width="11" height="7" viewBox="0 0 11 7"><path d="M1 1 L5.5 5.5 L10 1" fill="none" stroke="#e0e0e0" stroke-width="1.6"/></svg><div class="a" style="left:326px;top:1001px;width:72px;height:17px;background:#4f4f4f;border-radius:3px 3px 0 0"></div><div class="a" style="left:326px;top:1001px;width:51px;height:17px;background:#454545;border-radius:3px 0 0 0"></div><div class="t" style="left:330px;top:1006px;font-size:13px;color:#f0f0f0">3</div><svg style="left:382px;top:1010px" width="11" height="7" viewBox="0 0 11 7"><path d="M1 1 L5.5 5.5 L10 1" fill="none" stroke="#e0e0e0" stroke-width="1.6"/></svg><svg style="left:284px;top:1005px" width="40" height="13" viewBox="0 0 40 13"><rect x="0" y="1" width="2" height="11" fill="#bbb"/><path d="M10 1 L3 6.5 L10 12 Z" fill="#bbb"/><path d="M28 1 L21 6.5 L28 12 Z" fill="#bbb"/></svg><svg style="left:409px;top:1005px" width="35" height="13" viewBox="0 0 35 13"><path d="M1 1 L8 6.5 L1 12 Z" fill="#bbb"/><path d="M19 1 L26 6.5 L19 12 Z" fill="#bbb"/><rect x="27" y="1" width="2" height="11" fill="#bbb"/></svg><div class="a" style="left:444px;top:1000px;width:1px;height:18px;background:#4a4a4a"></div><div class="t" style="left:551px;top:1006px;font-size:13px;color:#d0d0d0">Selection</div><div class="a" style="left:700px;top:1000px;width:1px;height:18px;background:#4a4a4a"></div><svg style="left:708px;top:1006px" width="8" height="11" viewBox="0 0 8 11"><path d="M1 0.5 L7 5.5 L1 10.5 Z" fill="#bbb"/></svg><svg style="left:731px;top:1005px" width="6" height="10" viewBox="0 0 6 10"><path d="M5 1 L1 5 L5 9" fill="none" stroke="#9a9a9a" stroke-width="1.3"/></svg><svg style="left:1531px;top:1005px" width="6" height="10" viewBox="0 0 6 10"><path d="M1 1 L5 5 L1 9" fill="none" stroke="#9a9a9a" stroke-width="1.3"/></svg><div class="a" style="left:1159px;top:1001px;width:32px;height:17px;border-radius:8px;background:#5a5a5a"></div><div class="a" style="left:1545px;top:1000px;width:20px;height:18px;background:#535353"></div><div class="a" style="left:1567px;top:82px;width:48px;height:936px;background:#535353"></div><div class="a" style="left:1567px;top:82px;width:48px;height:14px;background:#434343"></div><div class="a" style="left:1615px;top:82px;width:3px;height:936px;background:#3d3d3d"></div><div class="a" style="left:1618px;top:82px;width:191px;height:14px;background:#434343"></div><div class="a" style="left:1567px;top:96px;width:242px;height:1px;background:#3a3a3a"></div><svg style="left:1599px;top:86px" width="10" height="7" viewBox="0 0 10 7"><path d="M4.5 0.5 L0.5 3.5 L4.5 6.5 L3.2 3.5 Z M9 0.5 L5 3.5 L9 6.5 L7.7 3.5 Z" fill="#d8d8d8"/></svg><div class="a" style="left:1567px;top:147px;width:48px;height:2px;background:#3f3f3f"></div><div class="a" style="left:1567px;top:233px;width:48px;height:2px;background:#3f3f3f"></div><div class="a" style="left:1567px;top:354px;width:48px;height:2px;background:#3f3f3f"></div><div class="a" style="left:1567px;top:475px;width:48px;height:2px;background:#3f3f3f"></div><div class="a" style="left:1567px;top:561px;width:48px;height:2px;background:#3f3f3f"></div><div class="a" style="left:1580px;top:101px;width:1px;height:5px;background:#383838"></div><div class="a" style="left:1583px;top:101px;width:1px;height:5px;background:#383838"></div><div class="a" style="left:1586px;top:101px;width:1px;height:5px;background:#383838"></div><div class="a" style="left:1589px;top:101px;width:1px;height:5px;background:#383838"></div><div class="a" style="left:1592px;top:101px;width:1px;height:5px;background:#383838"></div><div class="a" style="left:1595px;top:101px;width:1px;height:5px;background:#383838"></div><div class="a" style="left:1598px;top:101px;width:1px;height:5px;background:#383838"></div><div class="a" style="left:1601px;top:101px;width:1px;height:5px;background:#383838"></div><div class="a" style="left:1580px;top:152px;width:1px;height:5px;background:#383838"></div><div class="a" style="left:1583px;top:152px;width:1px;height:5px;background:#383838"></div><div class="a" style="left:1586px;top:152px;width:1px;height:5px;background:#383838"></div><div class="a" style="left:1589px;top:152px;width:1px;height:5px;background:#383838"></div><div class="a" style="left:1592px;top:152px;width:1px;height:5px;background:#383838"></div><div class="a" style="left:1595px;top:152px;width:1px;height:5px;background:#383838"></div><div class="a" style="left:1598px;top:152px;width:1px;height:5px;background:#383838"></div><div class="a" style="left:1601px;top:152px;width:1px;height:5px;background:#383838"></div><div class="a" style="left:1580px;top:238px;width:1px;height:5px;background:#383838"></div><div class="a" style="left:1583px;top:238px;width:1px;height:5px;background:#383838"></div><div class="a" style="left:1586px;top:238px;width:1px;height:5px;background:#383838"></div><div class="a" style="left:1589px;top:238px;width:1px;height:5px;background:#383838"></div><div class="a" style="left:1592px;top:238px;width:1px;height:5px;background:#383838"></div><div class="a" style="left:1595px;top:238px;width:1px;height:5px;background:#383838"></div><div class="a" style="left:1598px;top:238px;width:1px;height:5px;background:#383838"></div><div class="a" style="left:1601px;top:238px;width:1px;height:5px;background:#383838"></div><div class="a" style="left:1580px;top:359px;width:1px;height:5px;background:#383838"></div><div class="a" style="left:1583px;top:359px;width:1px;height:5px;background:#383838"></div><div class="a" style="left:1586px;top:359px;width:1px;height:5px;background:#383838"></div><div class="a" style="left:1589px;top:359px;width:1px;height:5px;background:#383838"></div><div class="a" style="left:1592px;top:359px;width:1px;height:5px;background:#383838"></div><div class="a" style="left:1595px;top:359px;width:1px;height:5px;background:#383838"></div><div class="a" style="left:1598px;top:359px;width:1px;height:5px;background:#383838"></div><div class="a" style="left:1601px;top:359px;width:1px;height:5px;background:#383838"></div><div class="a" style="left:1580px;top:480px;width:1px;height:5px;background:#383838"></div><div class="a" style="left:1583px;top:480px;width:1px;height:5px;background:#383838"></div><div class="a" style="left:1586px;top:480px;width:1px;height:5px;background:#383838"></div><div class="a" style="left:1589px;top:480px;width:1px;height:5px;background:#383838"></div><div class="a" style="left:1592px;top:480px;width:1px;height:5px;background:#383838"></div><div class="a" style="left:1595px;top:480px;width:1px;height:5px;background:#383838"></div><div class="a" style="left:1598px;top:480px;width:1px;height:5px;background:#383838"></div><div class="a" style="left:1601px;top:480px;width:1px;height:5px;background:#383838"></div><svg style="left:0;top:0" width="1809" height="1018" viewBox="0 0 1809 1018"><path d="M1582.5 119.5 L1603.5 119.5 M1582.5 126.5 L1603.5 126.5 M1582.5 133.5 L1603.5 133.5" stroke="#c6c6c6" stroke-width="1.3"/><circle cx="1588.5" cy="119.5" r="2.6" fill="#535353" stroke="#c6c6c6" stroke-width="1.3"/><circle cx="1596.5" cy="126.5" r="2.6" fill="#535353" stroke="#c6c6c6" stroke-width="1.3"/><circle cx="1590.5" cy="133.5" r="2.6" fill="#535353" stroke="#c6c6c6" stroke-width="1.3"/><path d="M1594 168.8 Q1605.5 169.5 1605 178.5 Q1604.5 186 1596 187.2 Q1588 188 1584 185 Q1580.5 182.5 1580.5 179 Q1580.5 176 1584 175.5 Q1587.5 175.5 1588 173 Q1588.5 169 1594 168.8 Z" fill="#c6c6c6"/><circle cx="1585" cy="179.8" r="2" fill="#535353"/><circle cx="1590.8" cy="183" r="2" fill="#535353"/><circle cx="1596.8" cy="182.3" r="1.9" fill="#535353"/><circle cx="1601" cy="178.3" r="1.7" fill="#535353"/><circle cx="1600" cy="173.2" r="1.4" fill="#535353"/><path d="M1583.5 222.5 L1583.50 203.20 A19.3 19.3 0 0 1 1588.50 203.86 Z" fill="#1e1e1e"/><path d="M1583.5 222.5 L1588.50 203.86 A19.3 19.3 0 0 1 1593.15 205.79 Z" fill="#3a3a3a"/><path d="M1583.5 222.5 L1593.15 205.79 A19.3 19.3 0 0 1 1597.15 208.85 Z" fill="#5c5c5c"/><path d="M1583.5 222.5 L1597.15 208.85 A19.3 19.3 0 0 1 1600.21 212.85 Z" fill="#888"/><path d="M1583.5 222.5 L1600.21 212.85 A19.3 19.3 0 0 1 1602.14 217.50 Z" fill="#aaa"/><path d="M1583.5 222.5 L1602.14 217.50 A19.3 19.3 0 0 1 1602.80 222.50 Z" fill="#d8d8d8"/><path d="M1583.5 222.5 L1583.5 203.2 A19.3 19.3 0 0 1 1602.8 222.5 Z" fill="none" stroke="#c6c6c6" stroke-width="1.2"/><rect x="1582" y="258" width="20.5" height="14" fill="#8a8a8a" stroke="#c6c6c6" stroke-width="1"/><path d="M1589 258 L1589 272 M1595.5 258 L1595.5 272 M1582 265 L1602.5 265" stroke="#c6c6c6" stroke-width="1"/><rect x="1589.5" y="258.5" width="5.5" height="6" fill="#aaa"/><rect x="1587" y="300" width="11" height="11" rx="1" fill="#c6c6c6"/><path d="M1590 300 L1589 292 M1592.5 300 L1592.5 289 M1595 300 L1598.5 294" stroke="#c6c6c6" stroke-width="1.4"/><rect x="1591" y="287" width="3.5" height="4" fill="#c6c6c6"/><path d="M1596 294 Q1600 289 1604 292 Z" fill="#c6c6c6"/><path d="M1589 292 Q1583 292 1585.5 287 Q1589 288 1589 292 Z" fill="#c6c6c6"/><circle cx="1593" cy="329" r="4.6" fill="#c6c6c6"/><circle cx="1587.5" cy="336" r="4.6" fill="#c6c6c6"/><circle cx="1598.5" cy="336" r="4.6" fill="#c6c6c6"/><path d="M1592 334 L1594 334 L1595 342 L1598 344 L1588 344 L1591 342 Z" fill="#c6c6c6"/><rect x="1582.5" y="377" width="21" height="1.8" fill="#c6c6c6"/><rect x="1582.5" y="382" width="21" height="3" fill="#c6c6c6"/><rect x="1582.5" y="388" width="21" height="4.5" fill="#c6c6c6"/><defs><linearGradient id="gr" x1="0" x2="1"><stop offset="0" stop-color="#222"/><stop offset="1" stop-color="#eee"/></linearGradient></defs><rect x="1582.8" y="412.8" width="20.4" height="14.5" fill="url(#gr)" stroke="#c6c6c6" stroke-width="1.4"/><circle cx="1588.5" cy="452.5" r="7.5" fill="#c6c6c6"/><circle cx="1595.5" cy="459" r="7.8" fill="#777" stroke="#c6c6c6" stroke-width="1.3"/><path d="M1588.5 459 A7.8 7.8 0 0 1 1596 452 A7.5 7.5 0 0 1 1588.5 459 Z" fill="#999"/><circle cx="1592.5" cy="499.8" r="10" fill="none" stroke="#c6c6c6" stroke-width="1" stroke-dasharray="2 1.6"/><circle cx="1592.5" cy="499.8" r="7.2" fill="#c6c6c6"/><rect x="1587" y="532.5" width="16" height="16" fill="none" stroke="#c6c6c6" stroke-width="1.4"/><rect x="1582.5" y="542" width="6.5" height="6.5" fill="#535353" stroke="#c6c6c6" stroke-width="1.3"/><rect x="1586" y="545.5" width="6.5" height="6.5" fill="#535353" stroke="#c6c6c6" stroke-width="1.3"/></svg><div class="a" style="left:1618px;top:97px;width:191px;height:921px;background:#535353"></div><div class="a" style="left:1618px;top:97px;width:191px;height:33px;background:#434343"></div><div class="a" style="left:1618px;top:97px;width:59px;height:34px;background:#535353"></div><div class="a" style="left:1677px;top:97px;width:81px;height:33px;background:#454545"></div><div class="a" style="left:1759px;top:97px;width:1px;height:33px;background:#3d3d3d"></div><div class="t" style="left:1630px;top:107.5px;font-size:12.5px;font-weight:bold;letter-spacing:-0.35px;color:#f0f0f0">Layers</div><div class="t" style="left:1689px;top:107.5px;font-size:12.5px;font-weight:bold;letter-spacing:-0.35px;color:#bdbdbd">Artboards</div><div class="a" style="left:1625px;top:139px;width:184px;height:43px;background:#575757;border-radius:3px 0 0 0"></div><div class="a" style="left:1633px;top:144px;width:176px;height:28px;background:#454545;border-radius:3px 0 0 3px;border:1px solid #4d4d4d;border-right:none"></div><svg style="left:1640px;top:151px" width="16" height="16" viewBox="0 0 16 16"><circle cx="6.5" cy="6.5" r="5" fill="none" stroke="#cfcfcf" stroke-width="1.6"/><line x1="10" y1="10" x2="15" y2="15" stroke="#cfcfcf" stroke-width="2.2" stroke-linecap="round"/></svg><div class="t" style="left:1668px;top:151.5px;font-size:14px;color:#686868">Search All</div><div class="a" style="left:1625px;top:182px;width:184px;height:818px;background:#535353;border-left:1px solid #5a5a5a;border-top:1px solid #5a5a5a;border-bottom:1px solid #5a5a5a"></div><div class="a" style="left:1625px;top:209.30px;width:184px;height:1px;background:#5b5b5b"></div><div class="a" style="left:1651px;top:184.00px;width:1px;height:25.30px;background:#5b5b5b"></div><div class="a" style="left:1677px;top:184.00px;width:1px;height:25.30px;background:#5b5b5b"></div><div class="a" style="left:1684px;top:184.00px;width:1px;height:25.30px;background:#5b5b5b"></div><div class="a" style="left:1679px;top:185.00px;width:4.5px;height:23.30px;background:#ff40ff"></div><svg style="left:1630px;top:190.65px" width="17" height="11" viewBox="0 0 17 11"><path d="M0.5 5.5 Q8.5 -3.5 16.5 5.5 Q8.5 14.5 0.5 5.5 Z" fill="#c8c8c8"/><circle cx="8.5" cy="5.5" r="3" fill="#535353"/><circle cx="8.8" cy="5.2" r="1.6" fill="#c8c8c8"/></svg><svg style="left:1694px;top:190.65px" width="7" height="11" viewBox="0 0 7 11"><path d="M1 1 L5.5 5.5 L1 10" fill="none" stroke="#f0f0f0" stroke-width="1.4"/></svg><svg style="left:1716px;top:185.00px" width="23" height="23" viewBox="0 0 23 23"><rect x="0.9" y="0.9" width="21.2" height="21.2" fill="#fff" stroke="#111" stroke-width="1.8"/><rect x="4" y="6" width="5" height="5" fill="#444"/><rect x="2" y="10" width="11" height="3" fill="#231f20"/><rect x="2" y="13" width="19" height="1" fill="#444"/></svg><div class="t" style="left:1744px;top:191.55px;font-size:12.5px;color:#ececec">Top Camera</div><div class="a" style="left:1625px;top:210.30px;width:184px;height:25.30px;background:#4b6078"></div><div class="a" style="left:1625px;top:235.60px;width:184px;height:1px;background:#5b5b5b"></div><div class="a" style="left:1651px;top:210.30px;width:1px;height:25.30px;background:#5b5b5b"></div><div class="a" style="left:1677px;top:210.30px;width:1px;height:25.30px;background:#5b5b5b"></div><div class="a" style="left:1684px;top:210.30px;width:1px;height:25.30px;background:#5b5b5b"></div><div class="a" style="left:1679px;top:211.30px;width:4.5px;height:23.30px;background:#4d4dff"></div><svg style="left:1630px;top:216.95px" width="17" height="11" viewBox="0 0 17 11"><path d="M0.5 5.5 Q8.5 -3.5 16.5 5.5 Q8.5 14.5 0.5 5.5 Z" fill="#c8c8c8"/><circle cx="8.5" cy="5.5" r="3" fill="#535353"/><circle cx="8.8" cy="5.2" r="1.6" fill="#c8c8c8"/></svg><svg style="left:1694px;top:216.95px" width="7" height="11" viewBox="0 0 7 11"><path d="M1 1 L5.5 5.5 L1 10" fill="none" stroke="#f0f0f0" stroke-width="1.4"/></svg><svg style="left:1716px;top:211.30px" width="23" height="23" viewBox="0 0 23 23"><rect x="0.9" y="0.9" width="21.2" height="21.2" fill="#fff" stroke="#111" stroke-width="1.8"/><rect x="4" y="2" width="7" height="19" fill="#3c3c3e"/><rect x="11" y="6" width="8" height="12" fill="#58595b"/></svg><div class="t" style="left:1744px;top:217.85px;font-size:12.5px;color:#ececec">Side Camera</div><div class="a" style="left:1625px;top:261.90px;width:184px;height:1px;background:#5b5b5b"></div><div class="a" style="left:1651px;top:236.60px;width:1px;height:25.30px;background:#5b5b5b"></div><div class="a" style="left:1677px;top:236.60px;width:1px;height:25.30px;background:#5b5b5b"></div><div class="a" style="left:1684px;top:236.60px;width:1px;height:25.30px;background:#5b5b5b"></div><div class="a" style="left:1679px;top:237.60px;width:4.5px;height:23.30px;background:#40ff40"></div><svg style="left:1630px;top:243.25px" width="17" height="11" viewBox="0 0 17 11"><path d="M0.5 5.5 Q8.5 -3.5 16.5 5.5 Q8.5 14.5 0.5 5.5 Z" fill="#c8c8c8"/><circle cx="8.5" cy="5.5" r="3" fill="#535353"/><circle cx="8.8" cy="5.2" r="1.6" fill="#c8c8c8"/></svg><svg style="left:1694px;top:243.25px" width="7" height="11" viewBox="0 0 7 11"><path d="M1 1 L5.5 5.5 L1 10" fill="none" stroke="#f0f0f0" stroke-width="1.4"/></svg><svg style="left:1716px;top:237.60px" width="23" height="23" viewBox="0 0 23 23"><rect x="0.9" y="0.9" width="21.2" height="21.2" fill="#fff" stroke="#111" stroke-width="1.8"/><rect x="2" y="8" width="10" height="6" fill="#231f20"/><rect x="12" y="8" width="8" height="6" fill="#fff" stroke="#2a6a8a" stroke-width="0.5"/><rect x="14" y="9" width="3" height="4" fill="#231f20"/></svg><div class="t" style="left:1744px;top:244.15px;font-size:12.5px;color:#ececec">Back Camera</div><div class="a" style="left:1625px;top:288.20px;width:184px;height:1px;background:#5b5b5b"></div><div class="a" style="left:1651px;top:262.90px;width:1px;height:25.30px;background:#5b5b5b"></div><div class="a" style="left:1677px;top:262.90px;width:1px;height:25.30px;background:#5b5b5b"></div><div class="a" style="left:1684px;top:262.90px;width:1px;height:25.30px;background:#5b5b5b"></div><div class="a" style="left:1679px;top:263.90px;width:4.5px;height:23.30px;background:#ff4040"></div><svg style="left:1630px;top:269.55px" width="17" height="11" viewBox="0 0 17 11"><path d="M0.5 5.5 Q8.5 -3.5 16.5 5.5 Q8.5 14.5 0.5 5.5 Z" fill="#c8c8c8"/><circle cx="8.5" cy="5.5" r="3" fill="#535353"/><circle cx="8.8" cy="5.2" r="1.6" fill="#c8c8c8"/></svg><svg style="left:1693px;top:272.05px" width="11" height="7" viewBox="0 0 11 7"><path d="M1 1 L5.5 5.5 L10 1" fill="none" stroke="#f0f0f0" stroke-width="1.4"/></svg><svg style="left:1716px;top:263.90px" width="23" height="23" viewBox="0 0 23 23"><rect x="0.9" y="0.9" width="21.2" height="21.2" fill="#fff" stroke="#111" stroke-width="1.8"/><rect x="2" y="9" width="9" height="5" fill="#414143"/><rect x="11" y="8" width="9" height="7" fill="#414143"/><circle cx="15.5" cy="11.5" r="2" fill="#bfe6fb"/></svg><div class="t" style="left:1744px;top:270.45px;font-size:12.5px;color:#ececec">Font Camera</div><div class="a" style="left:1625px;top:314.50px;width:184px;height:1px;background:#5b5b5b"></div><div class="a" style="left:1651px;top:289.20px;width:1px;height:25.30px;background:#5b5b5b"></div><div class="a" style="left:1677px;top:289.20px;width:1px;height:25.30px;background:#5b5b5b"></div><div class="a" style="left:1684px;top:289.20px;width:1px;height:25.30px;background:#5b5b5b"></div><div class="a" style="left:1679px;top:290.20px;width:4.5px;height:23.30px;background:#ff4a4a"></div><svg style="left:1745px;top:290.20px" width="23" height="23" viewBox="0 0 23 23"><rect x="0.9" y="0.9" width="21.2" height="21.2" fill="#fff" stroke="#111" stroke-width="1.8"/><rect x="1" y="9" width="21" height="3.5" fill="#ffee00"/></svg><div class="t" style="left:1773px;top:296.75px;font-size:12.5px;color:#ececec">Flash</div><div class="a" style="left:1625px;top:340.80px;width:184px;height:1px;background:#5b5b5b"></div><div class="a" style="left:1651px;top:315.50px;width:1px;height:25.30px;background:#5b5b5b"></div><div class="a" style="left:1677px;top:315.50px;width:1px;height:25.30px;background:#5b5b5b"></div><div class="a" style="left:1684px;top:315.50px;width:1px;height:25.30px;background:#5b5b5b"></div><div class="a" style="left:1679px;top:316.50px;width:4.5px;height:23.30px;background:#ff4a4a"></div><svg style="left:1630px;top:322.15px" width="17" height="11" viewBox="0 0 17 11"><path d="M0.5 5.5 Q8.5 -3.5 16.5 5.5 Q8.5 14.5 0.5 5.5 Z" fill="#c8c8c8"/><circle cx="8.5" cy="5.5" r="3" fill="#535353"/><circle cx="8.8" cy="5.2" r="1.6" fill="#c8c8c8"/></svg><svg style="left:1745px;top:316.50px" width="23" height="23" viewBox="0 0 23 23"><rect x="0.9" y="0.9" width="21.2" height="21.2" fill="#fff" stroke="#111" stroke-width="1.8"/><text x="2" y="13" font-family="Liberation Sans" font-weight="bold" font-size="5" fill="#333" textLength="19" lengthAdjust="spacingAndGlyphs">KANON</text></svg><div class="t" style="left:1773px;top:323.05px;font-size:12.5px;color:#ececec">KANON</div><div class="a" style="left:1625px;top:367.10px;width:184px;height:1px;background:#5b5b5b"></div><div class="a" style="left:1651px;top:341.80px;width:1px;height:25.30px;background:#5b5b5b"></div><div class="a" style="left:1677px;top:341.80px;width:1px;height:25.30px;background:#5b5b5b"></div><div class="a" style="left:1684px;top:341.80px;width:1px;height:25.30px;background:#5b5b5b"></div><div class="a" style="left:1679px;top:342.80px;width:4.5px;height:23.30px;background:#ff4a4a"></div><svg style="left:1630px;top:348.45px" width="17" height="11" viewBox="0 0 17 11"><path d="M0.5 5.5 Q8.5 -3.5 16.5 5.5 Q8.5 14.5 0.5 5.5 Z" fill="#c8c8c8"/><circle cx="8.5" cy="5.5" r="3" fill="#535353"/><circle cx="8.8" cy="5.2" r="1.6" fill="#c8c8c8"/></svg><svg style="left:1745px;top:342.80px" width="23" height="23" viewBox="0 0 23 23"><rect x="0.9" y="0.9" width="21.2" height="21.2" fill="#fff" stroke="#111" stroke-width="1.8"/><rect x="1" y="5" width="21" height="12" fill="#414143"/></svg><div class="t" style="left:1773px;top:349.35px;font-size:12.5px;color:#ececec">&lt;Rectangle&gt;</div><div class="a" style="left:1625px;top:393.40px;width:184px;height:1px;background:#5b5b5b"></div><div class="a" style="left:1651px;top:368.10px;width:1px;height:25.30px;background:#5b5b5b"></div><div class="a" style="left:1677px;top:368.10px;width:1px;height:25.30px;background:#5b5b5b"></div><div class="a" style="left:1684px;top:368.10px;width:1px;height:25.30px;background:#5b5b5b"></div><div class="a" style="left:1679px;top:369.10px;width:4.5px;height:23.30px;background:#ff4a4a"></div><svg style="left:1630px;top:374.75px" width="17" height="11" viewBox="0 0 17 11"><path d="M0.5 5.5 Q8.5 -3.5 16.5 5.5 Q8.5 14.5 0.5 5.5 Z" fill="#c8c8c8"/><circle cx="8.5" cy="5.5" r="3" fill="#535353"/><circle cx="8.8" cy="5.2" r="1.6" fill="#c8c8c8"/></svg><svg style="left:1745px;top:369.10px" width="23" height="23" viewBox="0 0 23 23"><rect x="0.9" y="0.9" width="21.2" height="21.2" fill="#fff" stroke="#111" stroke-width="1.8"/><rect x="10" y="1" width="3" height="21" fill="#231f20"/></svg><div class="t" style="left:1773px;top:375.65px;font-size:12.5px;color:#ececec">&lt;Rectangle&gt;</div><div class="a" style="left:1625px;top:419.70px;width:184px;height:1px;background:#5b5b5b"></div><div class="a" style="left:1651px;top:394.40px;width:1px;height:25.30px;background:#5b5b5b"></div><div class="a" style="left:1677px;top:394.40px;width:1px;height:25.30px;background:#5b5b5b"></div><div class="a" style="left:1684px;top:394.40px;width:1px;height:25.30px;background:#5b5b5b"></div><div class="a" style="left:1679px;top:395.40px;width:4.5px;height:23.30px;background:#ff4a4a"></div><svg style="left:1630px;top:401.05px" width="17" height="11" viewBox="0 0 17 11"><path d="M0.5 5.5 Q8.5 -3.5 16.5 5.5 Q8.5 14.5 0.5 5.5 Z" fill="#c8c8c8"/><circle cx="8.5" cy="5.5" r="3" fill="#535353"/><circle cx="8.8" cy="5.2" r="1.6" fill="#c8c8c8"/></svg><svg style="left:1722px;top:401.05px" width="7" height="11" viewBox="0 0 7 11"><path d="M1 1 L5.5 5.5 L1 10" fill="none" stroke="#f0f0f0" stroke-width="1.4"/></svg><svg style="left:1745px;top:395.40px" width="23" height="23" viewBox="0 0 23 23"><rect x="0.9" y="0.9" width="21.2" height="21.2" fill="#fff" stroke="#111" stroke-width="1.8"/><rect x="1" y="9" width="21" height="5" fill="#6d6e71"/></svg><div class="t" style="left:1773px;top:401.95px;font-size:12.5px;color:#ececec">Options</div><div class="a" style="left:1625px;top:446.00px;width:184px;height:1px;background:#5b5b5b"></div><div class="a" style="left:1651px;top:420.70px;width:1px;height:25.30px;background:#5b5b5b"></div><div class="a" style="left:1677px;top:420.70px;width:1px;height:25.30px;background:#5b5b5b"></div><div class="a" style="left:1684px;top:420.70px;width:1px;height:25.30px;background:#5b5b5b"></div><div class="a" style="left:1679px;top:421.70px;width:4.5px;height:23.30px;background:#ff4a4a"></div><svg style="left:1630px;top:427.35px" width="17" height="11" viewBox="0 0 17 11"><path d="M0.5 5.5 Q8.5 -3.5 16.5 5.5 Q8.5 14.5 0.5 5.5 Z" fill="#c8c8c8"/><circle cx="8.5" cy="5.5" r="3" fill="#535353"/><circle cx="8.8" cy="5.2" r="1.6" fill="#c8c8c8"/></svg><svg style="left:1745px;top:421.70px" width="23" height="23" viewBox="0 0 23 23"><rect x="0.9" y="0.9" width="21.2" height="21.2" fill="#fff" stroke="#111" stroke-width="1.8"/></svg><div class="t" style="left:1773px;top:428.25px;font-size:12.5px;color:#ececec">Graphix</div><div class="a" style="left:1625px;top:472.30px;width:184px;height:1px;background:#5b5b5b"></div><div class="a" style="left:1651px;top:447.00px;width:1px;height:25.30px;background:#5b5b5b"></div><div class="a" style="left:1677px;top:447.00px;width:1px;height:25.30px;background:#5b5b5b"></div><div class="a" style="left:1684px;top:447.00px;width:1px;height:25.30px;background:#5b5b5b"></div><div class="a" style="left:1679px;top:448.00px;width:4.5px;height:23.30px;background:#ff4a4a"></div><svg style="left:1630px;top:453.65px" width="17" height="11" viewBox="0 0 17 11"><path d="M0.5 5.5 Q8.5 -3.5 16.5 5.5 Q8.5 14.5 0.5 5.5 Z" fill="#c8c8c8"/><circle cx="8.5" cy="5.5" r="3" fill="#535353"/><circle cx="8.8" cy="5.2" r="1.6" fill="#c8c8c8"/></svg><svg style="left:1745px;top:448.00px" width="23" height="23" viewBox="0 0 23 23"><rect x="0.9" y="0.9" width="21.2" height="21.2" fill="#fff" stroke="#111" stroke-width="1.8"/><rect x="1" y="9.5" width="21" height="3" fill="#bcbec0"/></svg><div class="t" style="left:1773px;top:454.55px;font-size:12.5px;color:#ececec">Flash</div><div class="a" style="left:1625px;top:498.60px;width:184px;height:1px;background:#5b5b5b"></div><div class="a" style="left:1651px;top:473.30px;width:1px;height:25.30px;background:#5b5b5b"></div><div class="a" style="left:1677px;top:473.30px;width:1px;height:25.30px;background:#5b5b5b"></div><div class="a" style="left:1684px;top:473.30px;width:1px;height:25.30px;background:#5b5b5b"></div><div class="a" style="left:1679px;top:474.30px;width:4.5px;height:23.30px;background:#ff4a4a"></div><svg style="left:1630px;top:479.95px" width="17" height="11" viewBox="0 0 17 11"><path d="M0.5 5.5 Q8.5 -3.5 16.5 5.5 Q8.5 14.5 0.5 5.5 Z" fill="#c8c8c8"/><circle cx="8.5" cy="5.5" r="3" fill="#535353"/><circle cx="8.8" cy="5.2" r="1.6" fill="#c8c8c8"/></svg><svg style="left:1745px;top:474.30px" width="23" height="23" viewBox="0 0 23 23"><rect x="0.9" y="0.9" width="21.2" height="21.2" fill="#fff" stroke="#111" stroke-width="1.8"/><rect x="7" y="2" width="3" height="19" rx="1.5" fill="#58595b"/></svg><div class="t" style="left:1773px;top:480.85px;font-size:12.5px;color:#ececec">Grip</div><div class="a" style="left:1625px;top:524.90px;width:184px;height:1px;background:#5b5b5b"></div><div class="a" style="left:1651px;top:499.60px;width:1px;height:25.30px;background:#5b5b5b"></div><div class="a" style="left:1677px;top:499.60px;width:1px;height:25.30px;background:#5b5b5b"></div><div class="a" style="left:1684px;top:499.60px;width:1px;height:25.30px;background:#5b5b5b"></div><div class="a" style="left:1679px;top:500.60px;width:4.5px;height:23.30px;background:#ff4a4a"></div><svg style="left:1630px;top:506.25px" width="17" height="11" viewBox="0 0 17 11"><path d="M0.5 5.5 Q8.5 -3.5 16.5 5.5 Q8.5 14.5 0.5 5.5 Z" fill="#c8c8c8"/><circle cx="8.5" cy="5.5" r="3" fill="#535353"/><circle cx="8.8" cy="5.2" r="1.6" fill="#c8c8c8"/></svg><svg style="left:1745px;top:500.60px" width="23" height="23" viewBox="0 0 23 23"><rect x="0.9" y="0.9" width="21.2" height="21.2" fill="#fff" stroke="#111" stroke-width="1.8"/><path d="M2 3 Q17 4 21 20" fill="none" stroke="#00aeef" stroke-width="2.5"/></svg><div class="t" style="left:1773px;top:507.15px;font-size:12.5px;color:#ececec">Flare</div><div class="a" style="left:1625px;top:551.20px;width:184px;height:1px;background:#5b5b5b"></div><div class="a" style="left:1651px;top:525.90px;width:1px;height:25.30px;background:#5b5b5b"></div><div class="a" style="left:1677px;top:525.90px;width:1px;height:25.30px;background:#5b5b5b"></div><div class="a" style="left:1684px;top:525.90px;width:1px;height:25.30px;background:#5b5b5b"></div><div class="a" style="left:1679px;top:526.90px;width:4.5px;height:23.30px;background:#ff4a4a"></div><svg style="left:1630px;top:532.55px" width="17" height="11" viewBox="0 0 17 11"><path d="M0.5 5.5 Q8.5 -3.5 16.5 5.5 Q8.5 14.5 0.5 5.5 Z" fill="#c8c8c8"/><circle cx="8.5" cy="5.5" r="3" fill="#535353"/><circle cx="8.8" cy="5.2" r="1.6" fill="#c8c8c8"/></svg><svg style="left:1745px;top:526.90px" width="23" height="23" viewBox="0 0 23 23"><rect x="0.9" y="0.9" width="21.2" height="21.2" fill="#fff" stroke="#111" stroke-width="1.8"/><rect x="2" y="2" width="19" height="19" rx="5" fill="#dbeffc"/></svg><div class="t" style="left:1773px;top:533.45px;font-size:12.5px;color:#ececec">Lens</div><div class="a" style="left:1625px;top:577.50px;width:184px;height:1px;background:#5b5b5b"></div><div class="a" style="left:1651px;top:552.20px;width:1px;height:25.30px;background:#5b5b5b"></div><div class="a" style="left:1677px;top:552.20px;width:1px;height:25.30px;background:#5b5b5b"></div><div class="a" style="left:1684px;top:552.20px;width:1px;height:25.30px;background:#5b5b5b"></div><div class="a" style="left:1679px;top:553.20px;width:4.5px;height:23.30px;background:#ff4a4a"></div><svg style="left:1630px;top:558.85px" width="17" height="11" viewBox="0 0 17 11"><path d="M0.5 5.5 Q8.5 -3.5 16.5 5.5 Q8.5 14.5 0.5 5.5 Z" fill="#c8c8c8"/><circle cx="8.5" cy="5.5" r="3" fill="#535353"/><circle cx="8.8" cy="5.2" r="1.6" fill="#c8c8c8"/></svg><svg style="left:1745px;top:553.20px" width="23" height="23" viewBox="0 0 23 23"><rect x="0.9" y="0.9" width="21.2" height="21.2" fill="#fff" stroke="#111" stroke-width="1.8"/><circle cx="11.5" cy="11.5" r="9.5" fill="#231f20"/></svg><div class="t" style="left:1773px;top:559.75px;font-size:12.5px;color:#ececec">Lens Cover</div><div class="a" style="left:1625px;top:603.80px;width:184px;height:1px;background:#5b5b5b"></div><div class="a" style="left:1651px;top:578.50px;width:1px;height:25.30px;background:#5b5b5b"></div><div class="a" style="left:1677px;top:578.50px;width:1px;height:25.30px;background:#5b5b5b"></div><div class="a" style="left:1684px;top:578.50px;width:1px;height:25.30px;background:#5b5b5b"></div><div class="a" style="left:1679px;top:579.50px;width:4.5px;height:23.30px;background:#ff4a4a"></div><svg style="left:1630px;top:585.15px" width="17" height="11" viewBox="0 0 17 11"><path d="M0.5 5.5 Q8.5 -3.5 16.5 5.5 Q8.5 14.5 0.5 5.5 Z" fill="#c8c8c8"/><circle cx="8.5" cy="5.5" r="3" fill="#535353"/><circle cx="8.8" cy="5.2" r="1.6" fill="#c8c8c8"/></svg><svg style="left:1745px;top:579.50px" width="23" height="23" viewBox="0 0 23 23"><rect x="0.9" y="0.9" width="21.2" height="21.2" fill="#fff" stroke="#111" stroke-width="1.8"/><rect x="1" y="4" width="21" height="15" fill="#414143"/></svg><div class="t" style="left:1773px;top:586.05px;font-size:12.5px;color:#ececec">Body</div><div class="a" style="left:1625px;top:630.10px;width:184px;height:1px;background:#5b5b5b"></div><div class="a" style="left:1651px;top:604.80px;width:1px;height:25.30px;background:#5b5b5b"></div><div class="a" style="left:1677px;top:604.80px;width:1px;height:25.30px;background:#5b5b5b"></div><div class="a" style="left:1684px;top:604.80px;width:1px;height:25.30px;background:#5b5b5b"></div><div class="a" style="left:1679px;top:605.80px;width:4.5px;height:23.30px;background:#ff4a4a"></div><svg style="left:1630px;top:611.45px" width="17" height="11" viewBox="0 0 17 11"><path d="M0.5 5.5 Q8.5 -3.5 16.5 5.5 Q8.5 14.5 0.5 5.5 Z" fill="#c8c8c8"/><circle cx="8.5" cy="5.5" r="3" fill="#535353"/><circle cx="8.8" cy="5.2" r="1.6" fill="#c8c8c8"/></svg><svg style="left:1722px;top:611.45px" width="7" height="11" viewBox="0 0 7 11"><path d="M1 1 L5.5 5.5 L1 10" fill="none" stroke="#f0f0f0" stroke-width="1.4"/></svg><svg style="left:1745px;top:605.80px" width="23" height="23" viewBox="0 0 23 23"><rect x="0.9" y="0.9" width="21.2" height="21.2" fill="#fff" stroke="#111" stroke-width="1.8"/><path d="M2 11 L4 8 L19 8 L21 11 Z" fill="#231f20"/><rect x="1" y="11" width="21" height="1.5" fill="#231f20"/></svg><div class="t" style="left:1773px;top:612.35px;font-size:12.5px;color:#ececec">Microfone</div><div class="a" style="left:1625px;top:656.40px;width:184px;height:1px;background:#5b5b5b"></div><div class="a" style="left:1651px;top:631.10px;width:1px;height:25.30px;background:#5b5b5b"></div><div class="a" style="left:1677px;top:631.10px;width:1px;height:25.30px;background:#5b5b5b"></div><div class="a" style="left:1684px;top:631.10px;width:1px;height:25.30px;background:#5b5b5b"></div><div class="a" style="left:1679px;top:632.10px;width:4.5px;height:23.30px;background:#ff4a4a"></div><svg style="left:1630px;top:637.75px" width="17" height="11" viewBox="0 0 17 11"><path d="M0.5 5.5 Q8.5 -3.5 16.5 5.5 Q8.5 14.5 0.5 5.5 Z" fill="#c8c8c8"/><circle cx="8.5" cy="5.5" r="3" fill="#535353"/><circle cx="8.8" cy="5.2" r="1.6" fill="#c8c8c8"/></svg><svg style="left:1745px;top:632.10px" width="23" height="23" viewBox="0 0 23 23"><rect x="0.9" y="0.9" width="21.2" height="21.2" fill="#fff" stroke="#111" stroke-width="1.8"/><rect x="1" y="9.5" width="21" height="4" fill="#6d6e71"/></svg><div class="t" style="left:1773px;top:638.65px;font-size:12.5px;color:#ececec">Photo</div><div class="a" style="left:1625px;top:682.70px;width:184px;height:1px;background:#5b5b5b"></div><div class="a" style="left:1651px;top:657.40px;width:1px;height:25.30px;background:#5b5b5b"></div><div class="a" style="left:1677px;top:657.40px;width:1px;height:25.30px;background:#5b5b5b"></div><div class="a" style="left:1684px;top:657.40px;width:1px;height:25.30px;background:#5b5b5b"></div><div class="a" style="left:1679px;top:658.40px;width:4.5px;height:23.30px;background:#4a7aff"></div><svg style="left:1630px;top:664.05px" width="17" height="11" viewBox="0 0 17 11"><path d="M0.5 5.5 Q8.5 -3.5 16.5 5.5 Q8.5 14.5 0.5 5.5 Z" fill="#c8c8c8"/><circle cx="8.5" cy="5.5" r="3" fill="#535353"/><circle cx="8.8" cy="5.2" r="1.6" fill="#c8c8c8"/></svg><svg style="left:1658px;top:663.55px" width="12" height="13" viewBox="0 0 12 13"><path d="M3 6 L3 4 Q3 1 6 1 Q9 1 9 4 L9 6" fill="none" stroke="#bdbdbd" stroke-width="1.5"/><rect x="1" y="6" width="10" height="7" fill="#bdbdbd"/><rect x="5.2" y="8" width="1.6" height="3" fill="#535353"/></svg><svg style="left:1716px;top:658.40px" width="23" height="23" viewBox="0 0 23 23"><rect x="0.9" y="0.9" width="21.2" height="21.2" fill="#fff" stroke="#111" stroke-width="1.8"/></svg><div class="t" style="left:1744px;top:664.95px;font-size:12.5px;color:#ececec">Example</div><div class="a" style="left:1625px;top:993px;width:184px;height:1px;background:#5a5a5a"></div><div class="a" style="left:1618px;top:994px;width:191px;height:24px;background:#535353"></div><div class="t" style="left:1624px;top:1001px;font-size:13px;color:#e0e0e0">5 La...</div><svg style="left:1677px;top:999px" width="20" height="17" viewBox="0 0 20 17"><path d="M2 1 L2 15 M0 3 L14 3 M12 1 L12 9 M0 13 L8 13" fill="none" stroke="#c8c8c8" stroke-width="1.6"/><path d="M10 9 L16 9 L16 16 L13 13.5 L10 16 Z" fill="#c8c8c8"/></svg><svg style="left:1706px;top:999px" width="18" height="17" viewBox="0 0 18 17"><path d="M7 3 L1 3 L1 16 L14 16 L14 10 M9 1 L16 1 L16 8 M16 1 L8 9" fill="none" stroke="#c8c8c8" stroke-width="1.6"/></svg><svg style="left:1739px;top:999px" width="17" height="17" viewBox="0 0 17 17"><circle cx="7" cy="7" r="5" fill="none" stroke="#777" stroke-width="1.6"/><line x1="10.5" y1="10.5" x2="15" y2="15" stroke="#777" stroke-width="2"/></svg><svg style="left:1771px;top:1000px" width="16" height="16" viewBox="0 0 16 16"><rect x="1" y="1" width="9" height="9" fill="#c8c8c8" stroke="#c8c8c8" stroke-width="1.4"/><rect x="5" y="5" width="10" height="10" fill="none" stroke="#c8c8c8" stroke-width="1.4"/></svg><svg style="left:1800px;top:1000px" width="9" height="14" viewBox="0 0 9 14"><path d="M2 0 L2 8 L8 8 M5 5 L8 8 L5 11" fill="none" stroke="#c8c8c8" stroke-width="1.5"/></svg></body></html>
